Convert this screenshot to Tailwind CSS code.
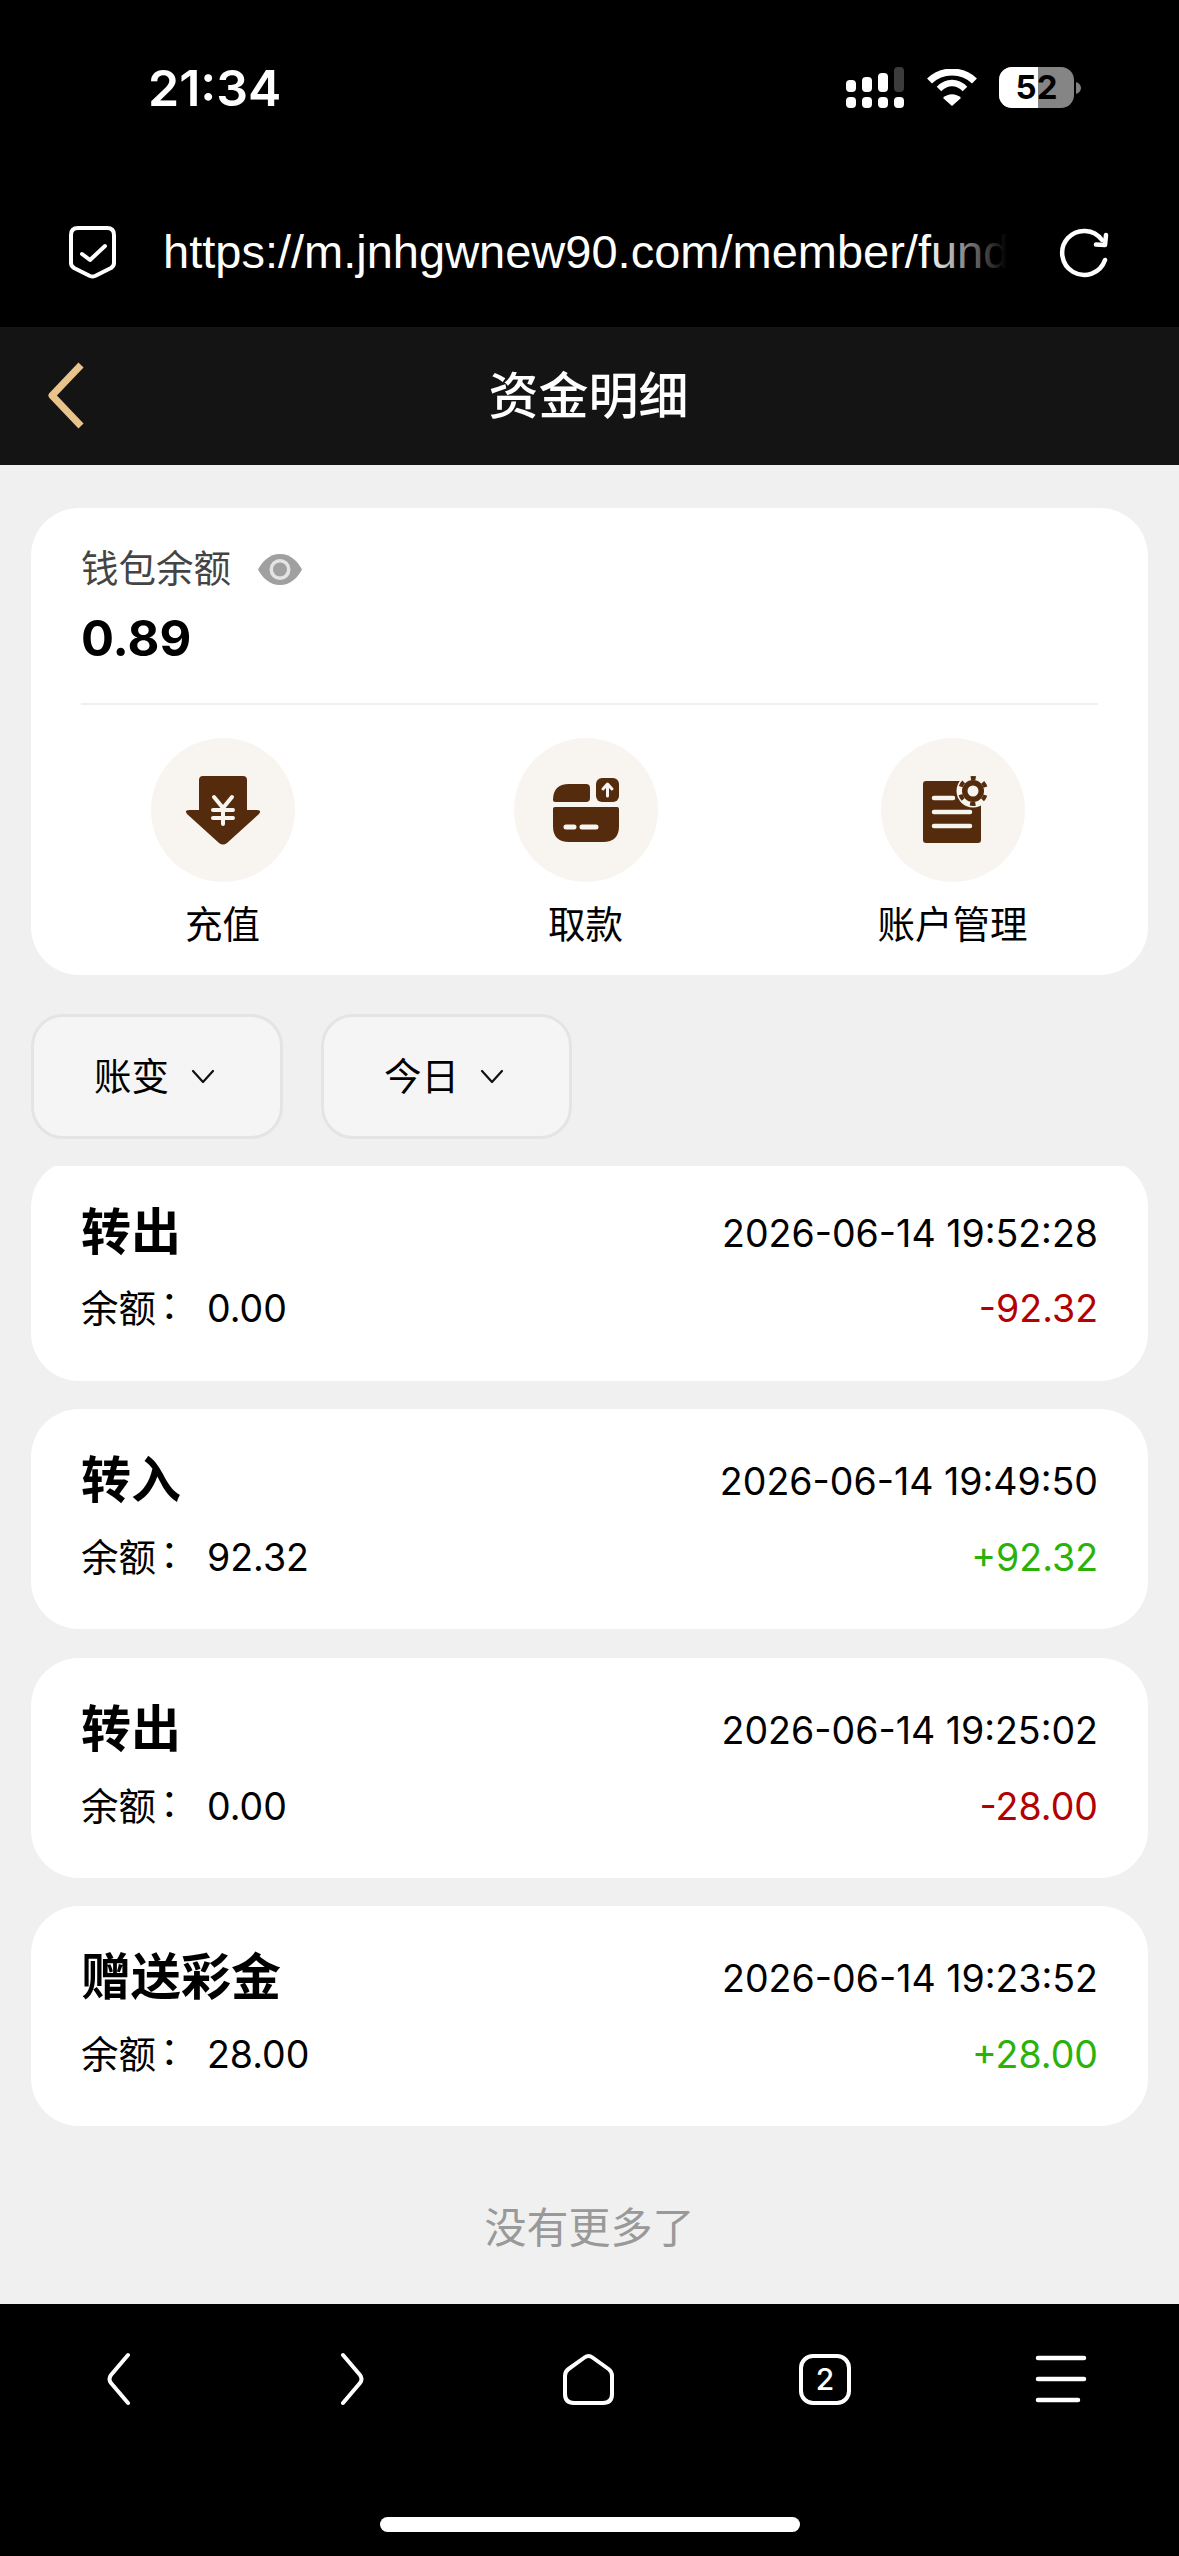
<!doctype html>
<html lang="zh">
<head>
<meta charset="utf-8">
<script src="https://cdn.jsdelivr.net/npm/@tailwindcss/browser@4"></script>
</head>
<body class="bg-[#f0f0f0] font-['Inter','Noto_Sans_CJK_SC',sans-serif]">
<div class="w-[1179px] h-[2556px] flex flex-col overflow-hidden bg-[#f0f0f0]">

  <!-- status + url -->
  <div class="h-[327px] bg-black text-white flex flex-col shrink-0">
    <div class="h-[212px] shrink-0 flex items-start justify-between pl-[148px] pr-[98px] pt-[61px]">
      <span class="text-[50px] leading-[54px] font-semibold">21:34</span>
      <div class="flex items-start pt-[6px]">
        <svg width="58" height="42" viewBox="0 0 58 42"><g fill="#fff"><rect x="0" y="13" width="10" height="12" rx="4"/><rect x="16" y="10" width="10" height="15" rx="4"/><rect x="32" y="6" width="10" height="19" rx="4"/><rect x="48" y="0" width="10" height="25" rx="4" fill="#3c3c3c"/><rect x="0" y="30" width="10" height="11" rx="4"/><rect x="16" y="30" width="10" height="11" rx="4"/><rect x="32" y="30" width="10" height="11" rx="4"/><rect x="48" y="30" width="10" height="11" rx="4"/></g></svg>
        <svg class="ml-[23px] mt-[2px]" width="50" height="37" viewBox="0 0 50 37"><path d="M2.5 12C15 0 35 0 47.5 12" fill="none" stroke="#fff" stroke-width="7"/><path d="M12 20C20 12 30 12 38 20" fill="none" stroke="#fff" stroke-width="6.5"/><path d="M25 37L16 29C21 24 29 24 34 29Z" fill="#fff"/></svg>
        <div class="relative ml-[22px] w-[75px] h-[41px] rounded-[13px] overflow-hidden bg-[#858585]">
          <div class="absolute left-0 top-0 h-full w-[39px] bg-white"></div>
          <div class="absolute inset-0 flex items-center justify-center text-black text-[33px] leading-[41px] font-bold">52</div>
        </div>
        <svg class="ml-[2px] mt-[15px]" width="5" height="12" viewBox="0 0 5 12"><path d="M0 0C3 1 5 3 5 6S3 11 0 12Z" fill="#808080"/></svg>
      </div>
    </div>
    <div class="flex items-center h-[80px] pl-[68px]">
      <svg width="50" height="56" viewBox="0 0 50 56" class="shrink-0"><path d="M10 4H39Q46 4 46 11V39Q46 42 43 44L27 52Q24.5 53 22 52L6 44Q3 42 3 39V11Q3 4 10 4Z" fill="none" stroke="#fff" stroke-width="4" stroke-linejoin="round"/><path d="M14 30L22 36L37 22" fill="none" stroke="#fff" stroke-width="4" stroke-linecap="round" stroke-linejoin="round"/></svg>
      <div class="relative ml-[45px] w-[844px] shrink-0 overflow-hidden whitespace-nowrap font-['Liberation_Sans',sans-serif] text-[47px] leading-[60px] text-white">https://m.jnhgwnew90.com/member/fundDetail
        <div class="absolute right-0 top-0 h-full w-[80px] bg-gradient-to-r from-black/0 to-black"></div>
      </div>
      <svg width="54" height="54" viewBox="0 0 54 54" class="ml-[51px] shrink-0"><path d="M47 35A22 22 0 1 1 44 15" fill="none" stroke="#fff" stroke-width="4.5" stroke-linecap="round"/><path d="M48 10L47 20L38 19.5" fill="none" stroke="#fff" stroke-width="4.5" stroke-linecap="round" stroke-linejoin="round"/></svg>
    </div>
  </div>

  <!-- header -->
  <div class="relative h-[138px] shrink-0 bg-[#141414] flex items-center justify-center">
    <svg class="absolute left-[44px] top-[34px]" width="44" height="70" viewBox="0 0 44 70"><path d="M37 4L8 34.5L37 65" fill="none" stroke="#e8c48c" stroke-width="7" stroke-linejoin="round"/></svg>
    <span class="text-white text-[50px] leading-[70px] font-medium -translate-x-[1px]">资金明细</span>
  </div>

  <!-- content -->
  <div class="flex flex-col flex-1 px-[31px] pt-[43px]">
    <div class="bg-white rounded-[48px] h-[467px] px-[50px] pt-[32px]">
      <div class="flex items-center h-[58px]">
        <span class="text-[37.5px] leading-[58px] text-[#444]">钱包余额</span>
        <svg class="ml-[27px]" width="44" height="31" viewBox="0 0 44 31"><path d="M22 0C33 0 40 8 44 15.500C40 23 33 31 22 31S4 23 0 15.500C4 8 11 0 22 0Z" fill="#a0a0a0"/><circle cx="22" cy="15.500" r="10.500" fill="#e4e4e4"/><circle cx="22" cy="15.500" r="7" fill="#a0a0a0"/></svg>
      </div>
      <div class="text-[49px] leading-[60px] font-bold text-black mt-[11px]">0.89</div>
      <div class="h-[2px] bg-[#f0f0f0] mt-[34px]"></div>
      <div class="grid grid-cols-3 w-[1095px] ml-[-41px] mt-[33px]">
        <div class="flex flex-col items-center">
          <div class="w-[144px] h-[144px] rounded-full bg-[#f8f5f1] flex items-center justify-center">
            <svg width="76" height="70" viewBox="0 0 76 70" class="mt-[2px]"><path d="M14 4Q14 0 18 0H58Q62 0 62 4V34H72Q77 34 74 38L42 67Q38 70 34 67L2 38Q-1 34 4 34H14Z" fill="#542c0d"/><path d="M29 21L38 32L47 21M28 34H48M28 42H48M38 32V48" fill="none" stroke="#f8f5f1" stroke-width="4" stroke-linecap="round" stroke-linejoin="round"/></svg>
          </div>
          <span class="text-[37.5px] leading-[50px] text-black mt-[18px]">充值</span>
        </div>
        <div class="flex flex-col items-center -translate-x-[2px]">
          <div class="w-[144px] h-[144px] rounded-full bg-[#f8f5f1] flex items-center justify-center">
            <svg width="66" height="64" viewBox="0 0 66 64"><path d="M0 22Q0 6 16 6H33Q37 6 37 10V20Q37 24 33 24H2Q0 24 0 22Z" fill="#542c0d"/><rect x="43" y="0" width="23" height="24" rx="6" fill="#542c0d"/><path d="M54.500 18V7M50 11L54.500 6L59 11" fill="none" stroke="#f8f5f1" stroke-width="3" stroke-linecap="round" stroke-linejoin="round"/><path d="M0 31Q0 29 2 29H64Q66 29 66 31V48Q66 64 50 64H16Q0 64 0 48Z" fill="#542c0d"/><path d="M13 49H21M29 49H43" stroke="#f8f5f1" stroke-width="5" stroke-linecap="round"/></svg>
          </div>
          <span class="text-[37.5px] leading-[50px] text-black mt-[18px]">取款</span>
        </div>
        <div class="flex flex-col items-center">
          <div class="w-[144px] h-[144px] rounded-full bg-[#f8f5f1] flex items-center justify-center">
            <svg width="66" height="68" viewBox="0 0 66 68" class="ml-[6px]"><rect x="0" y="5" width="58" height="62" rx="3" fill="#542c0d"/><path d="M11 22H30M11 36H47M11 50H47" stroke="#f8f5f1" stroke-width="4.500" stroke-linecap="round"/><circle cx="50" cy="15" r="16.500" fill="#f8f5f1"/><circle cx="50" cy="15" r="11" fill="#542c0d"/><circle cx="50" cy="15" r="13" fill="none" stroke="#542c0d" stroke-width="4" stroke-dasharray="5.500 8.110" stroke-dashoffset="2.750" transform="rotate(-90 50 15)"/><circle cx="50" cy="15" r="5.500" fill="#f8f5f1"/></svg>
          </div>
          <span class="text-[37.5px] leading-[50px] text-black mt-[18px]">账户管理</span>
        </div>
      </div>
    </div>

    <!-- filters -->
    <div class="flex gap-[38px] mt-[39px]">
      <div class="w-[252px] h-[125px] rounded-[32px] border-[3px] border-[#e4e4e4] bg-[#f5f5f5] flex items-center justify-center gap-[22px] pr-[5px]">
        <span class="text-[37.5px] leading-[50px] text-black">账变</span>
        <svg width="24" height="15" viewBox="0 0 24 15"><path d="M2 2L12 13L22 2" fill="none" stroke="#111" stroke-width="2.200" stroke-linecap="round" stroke-linejoin="round"/></svg>
      </div>
      <div class="w-[251px] h-[125px] rounded-[32px] border-[3px] border-[#e4e4e4] bg-[#f5f5f5] flex items-center justify-center gap-[21px] pr-[5px]">
        <span class="text-[37.5px] leading-[50px] text-black">今日</span>
        <svg width="24" height="15" viewBox="0 0 24 15"><path d="M2 2L12 13L22 2" fill="none" stroke="#111" stroke-width="2.200" stroke-linecap="round" stroke-linejoin="round"/></svg>
      </div>
    </div>

    <!-- list -->
    <div class="flex flex-col gap-[28px] mt-[27px]">
      <div class="h-[215px] overflow-hidden">
        <div class="bg-white rounded-[48px] h-[222px] mt-[-7px] px-[50px] pt-[40px]">
          <div class="flex items-center justify-between h-[70px]">
            <span class="text-[50px] leading-[70px] font-bold text-black mb-[4px]">转出</span>
            <span class="text-[37.5px] leading-[50px] text-black">2026-06-14 19:52:28</span>
          </div>
          <div class="flex items-center justify-between mt-[15px] h-[50px]">
            <span class="flex text-[37.5px] leading-[50px] text-black"><span class="w-[126px]">余额<span class="inline-block translate-x-[4px] -translate-y-[4px]">：</span></span>0.00</span>
            <span class="text-[37.5px] leading-[50px] text-[#b30000]">-92.32</span>
          </div>
        </div>
      </div>
      <div class="bg-white rounded-[48px] h-[220px] px-[50px] pt-[38px]">
        <div class="flex items-center justify-between h-[70px]">
          <span class="text-[50px] leading-[70px] font-bold text-black mb-[4px]">转入</span>
          <span class="text-[37.5px] leading-[50px] text-black">2026-06-14 19:49:50</span>
        </div>
        <div class="flex items-center justify-between mt-[16px] h-[50px]">
          <span class="flex text-[37.5px] leading-[50px] text-black"><span class="w-[126px]">余额<span class="inline-block translate-x-[4px] -translate-y-[4px]">：</span></span>92.32</span>
          <span class="text-[37.5px] leading-[50px] text-[#2ab208]">+92.32</span>
        </div>
      </div>
      <div class="bg-white rounded-[48px] h-[220px] px-[50px] pt-[38px] mt-[1px]">
        <div class="flex items-center justify-between h-[70px]">
          <span class="text-[50px] leading-[70px] font-bold text-black mb-[4px]">转出</span>
          <span class="text-[37.5px] leading-[50px] text-black">2026-06-14 19:25:02</span>
        </div>
        <div class="flex items-center justify-between mt-[16px] h-[50px]">
          <span class="flex text-[37.5px] leading-[50px] text-black"><span class="w-[126px]">余额<span class="inline-block translate-x-[4px] -translate-y-[4px]">：</span></span>0.00</span>
          <span class="text-[37.5px] leading-[50px] text-[#b30000]">-28.00</span>
        </div>
      </div>
      <div class="bg-white rounded-[48px] h-[220px] px-[50px] pt-[38px]">
        <div class="flex items-center justify-between h-[70px]">
          <span class="text-[50px] leading-[70px] font-bold text-black mb-[4px]">赠送彩金</span>
          <span class="text-[37.5px] leading-[50px] text-black">2026-06-14 19:23:52</span>
        </div>
        <div class="flex items-center justify-between mt-[16px] h-[50px]">
          <span class="flex text-[37.5px] leading-[50px] text-black"><span class="w-[126px]">余额<span class="inline-block translate-x-[4px] -translate-y-[4px]">：</span></span>28.00</span>
          <span class="text-[37.5px] leading-[50px] text-[#2ab208]">+28.00</span>
        </div>
      </div>
    </div>
    <div class="text-center text-[42px] leading-[60px] text-[#999] mt-[72px]">没有更多了</div>
  </div>

  <!-- bottom bar -->
  <div class="h-[252px] shrink-0 bg-black">
    <div class="grid grid-cols-5 w-[1180px] ml-[-1px] pt-[48px] justify-items-center items-center h-[102px]">
      <svg width="28" height="54" viewBox="0 0 28 54" class="-translate-x-[1px]"><path d="M26 3L9 23Q6 27 9 31L26 51" fill="none" stroke="#fff" stroke-width="4" stroke-linecap="round" stroke-linejoin="round"/></svg>
      <svg width="28" height="54" viewBox="0 0 28 54" class="translate-x-[2px]"><path d="M2 3L19 23Q22 27 19 31L2 51" fill="none" stroke="#fff" stroke-width="4" stroke-linecap="round" stroke-linejoin="round"/></svg>
      <svg width="54" height="54" viewBox="0 0 54 54"><path d="M22.500 5.500Q26.500 2.500 30.500 5.500L46.500 17Q50 19.500 50 24V42Q50 51 41 51H12Q3 51 3 42V24Q3 19.500 6.500 17Z" fill="none" stroke="#fff" stroke-width="4" stroke-linejoin="round"/></svg>
      <div class="w-[52px] h-[51px] rounded-[14px] border-[4px] border-white flex items-center justify-center text-white text-[30px] leading-[34px] font-medium">2</div>
      <svg width="52" height="54" viewBox="0 0 52 54"><path d="M3 6H49M3 27H49M3 48H43" fill="none" stroke="#fff" stroke-width="4.500" stroke-linecap="round"/></svg>
    </div>
    <div class="w-[420px] h-[15px] rounded-full bg-white mx-auto mt-[111px]"></div>
  </div>
</div>
</body>
</html>
